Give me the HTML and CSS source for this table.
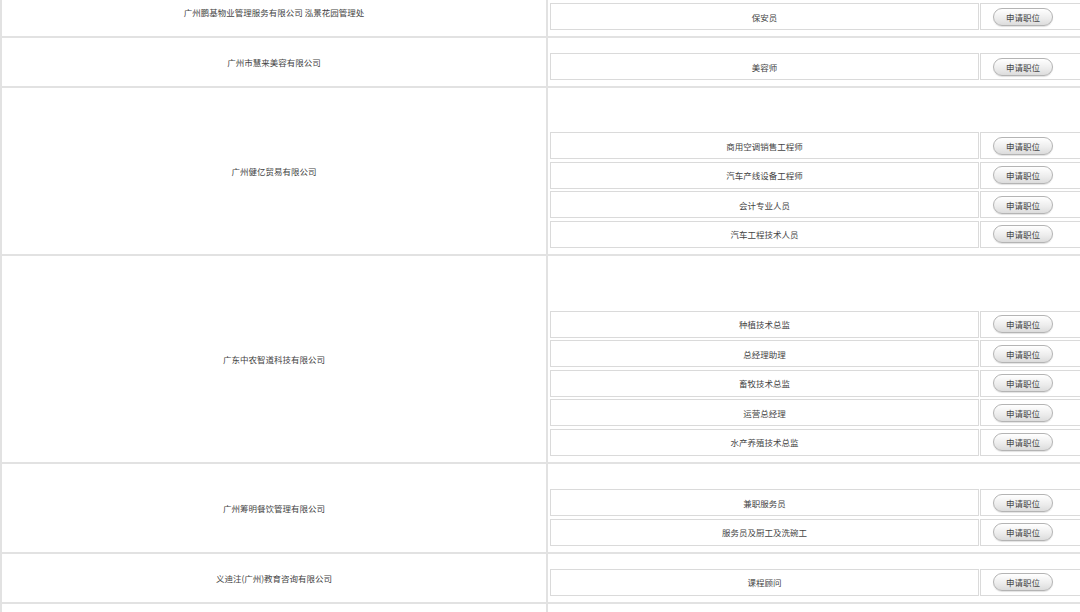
FILE: index.html
```html
<!DOCTYPE html>
<html lang="zh-CN">
<head>
  <meta charset="UTF-8" />
  <title>招聘职位</title>
  <link rel="stylesheet" href="styles.css">
</head>
<body>
  <div class="job-list">
    <!-- one group per company -->
    <div class="group">
      <div class="company">广州鹏基物业管理服务有限公司 泓景花园管理处</div>
      <div class="jobs n1">
        <div class="job"><div class="job-name">保安员</div><div class="job-apply"><button>申请职位</button></div></div>
      </div>
    </div>

    <div class="group">
      <div class="company">广州市慧来美容有限公司</div>
      <div class="jobs n1">
        <div class="job"><div class="job-name">美容师</div><div class="job-apply"><button>申请职位</button></div></div>
      </div>
    </div>

    <div class="group">
      <div class="company">广州健亿贸易有限公司</div>
      <div class="jobs n4">
        <div class="job"><div class="job-name">商用空调销售工程师</div><div class="job-apply"><button>申请职位</button></div></div>
        <div class="job"><div class="job-name">汽车产线设备工程师</div><div class="job-apply"><button>申请职位</button></div></div>
        <div class="job"><div class="job-name">会计专业人员</div><div class="job-apply"><button>申请职位</button></div></div>
        <div class="job"><div class="job-name">汽车工程技术人员</div><div class="job-apply"><button>申请职位</button></div></div>
      </div>
    </div>

    <div class="group">
      <div class="company">广东中农智道科技有限公司</div>
      <div class="jobs n5">
        <div class="job"><div class="job-name">种植技术总监</div><div class="job-apply"><button>申请职位</button></div></div>
        <div class="job"><div class="job-name">总经理助理</div><div class="job-apply"><button>申请职位</button></div></div>
        <div class="job"><div class="job-name">畜牧技术总监</div><div class="job-apply"><button>申请职位</button></div></div>
        <div class="job"><div class="job-name">运营总经理</div><div class="job-apply"><button>申请职位</button></div></div>
        <div class="job"><div class="job-name">水产养殖技术总监</div><div class="job-apply"><button>申请职位</button></div></div>
      </div>
    </div>

    <div class="group">
      <div class="company">广州筹明餐饮管理有限公司</div>
      <div class="jobs n2">
        <div class="job"><div class="job-name">兼职服务员</div><div class="job-apply"><button>申请职位</button></div></div>
        <div class="job"><div class="job-name">服务员及厨工及洗碗工</div><div class="job-apply"><button>申请职位</button></div></div>
      </div>
    </div>

    <div class="group">
      <div class="company">义迪注(广州)教育咨询有限公司</div>
      <div class="jobs n1">
        <div class="job"><div class="job-name">课程顾问</div><div class="job-apply"><button>申请职位</button></div></div>
      </div>
    </div>

    <div class="group">
      <div class="company"></div>
      <div class="jobs n1"></div>
    </div>
  </div>
</body>
</html>
```

FILE: styles.css
```css
body {
  margin: 0;
  background: #fff;
  overflow: hidden;
  font-family: "Noto Sans CJK SC", "Noto Sans", sans-serif;
  font-size: 8.5px;
  color: #444;
}
.job-list {
  width: 1120px;
  margin-top: -12px;
  border-left: 2px solid #e2e2e2;
}
.group {
  display: flex;
  border-bottom: 2px solid #e2e2e2;
}
.company {
  width: 544px;
  flex: none;
  display: flex;
  align-items: center;
  justify-content: center;
  border-right: 2px solid #e2e2e2;
}
.jobs {
  flex: 1;
  display: flex;
  flex-direction: column;
  justify-content: flex-end;
  gap: 2.6px;
  padding: 0 0 6px 2px;
}
.jobs.n1 { padding-top: 15px; }
.jobs.n2 { padding-top: 25.4px; }
.jobs.n4 { padding-top: 44.2px; }
.jobs.n5 { padding-top: 54.6px; }
.job {
  display: flex;
  gap: 1px;
  height: 27px;
}
.job-name {
  width: 427px;
  border: 1px solid #dadada;
  display: flex;
  align-items: center;
  justify-content: center;
}
.job-apply {
  flex: 1;
  border: 1px solid #dadada;
  display: flex;
  align-items: center;
  padding-left: 12px;
}
button {
  width: 60px;
  height: 18px;
  padding: 0;
  border: 1px solid #b4b4b4;
  border-radius: 9px;
  background: linear-gradient(#ffffff, #ececec 60%, #dcdcdc);
  box-shadow: 0 1px 1px rgba(0,0,0,0.12);
  font-family: "Noto Sans CJK SC", "Noto Sans", sans-serif;
  font-size: 8.5px;
  color: #444;
  cursor: pointer;
}
```
